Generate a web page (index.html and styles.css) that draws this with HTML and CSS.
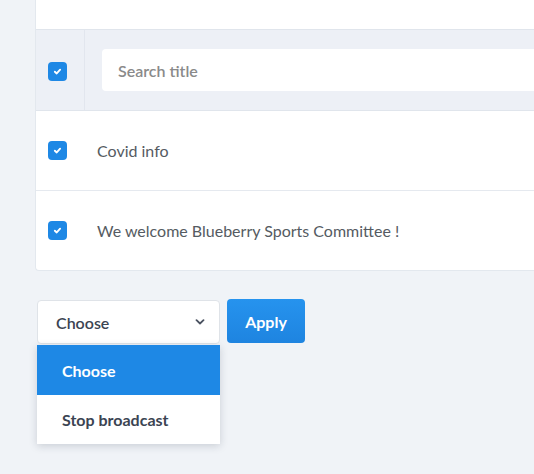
FILE: index.html
```html
<!DOCTYPE html>
<html>
<head>
<meta charset="utf-8">
<link rel="stylesheet" href="styles.css">
</head>
<body>
<div class="page">
  <div class="card">
    <div class="card-top"></div>
    <div class="row row-head">
      <div class="cell-check"><span class="cb"><svg viewBox="0 0 10 10"><path d="M2.6 5.2 L4.3 6.8 L7.4 3.4" /></svg></span></div>
      <div class="cell-main"><div class="search">Search title</div></div>
    </div>
    <div class="row">
      <div class="cell-check"><span class="cb"><svg viewBox="0 0 10 10"><path d="M2.6 5.2 L4.3 6.8 L7.4 3.4" /></svg></span></div>
      <div class="cell-text">Covid info</div>
    </div>
    <div class="row row-last">
      <div class="cell-check"><span class="cb"><svg viewBox="0 0 10 10"><path d="M2.6 5.2 L4.3 6.8 L7.4 3.4" /></svg></span></div>
      <div class="cell-text">We welcome Blueberry Sports Committee !</div>
    </div>
  </div>
  <div class="actions">
    <div class="select-wrap">
      <div class="select">
        <span>Choose</span>
        <svg class="chev" viewBox="0 0 10 6"><path d="M1.5 1.2 L5 4.5 L8.5 1.2" /></svg>
      </div>
      <ul class="menu">
        <li class="opt opt-active">Choose</li>
        <li class="opt">Stop broadcast</li>
      </ul>
    </div>
    <button class="btn">Apply</button>
  </div>
</div>
</body>
</html>
```
FILE: styles.css
```css
* { box-sizing: border-box; }
html, body { margin: 0; padding: 0; }
body {
  background: #f0f3f7;
  font-family: "Lato", "Noto Sans", sans-serif;
  width: 534px;
  height: 474px;
  overflow: hidden;
}
.page { padding-left: 35px; }
.card {
  background: #fff;
  border: 1px solid #e3e8ee;
  border-top: none;
  border-right: none;
  border-radius: 0 0 0 4px;
}
.card-top { height: 29px; }
.row {
  display: flex;
  align-items: center;
  height: 80px;
  border-bottom: 1px solid #e5e9ef;
}
.row-last { border-bottom: none; height: 79px; }
.row-head {
  background: #edf0f6;
  border-top: 1px solid #e0e5ec;
  border-bottom: 1px solid #e0e5ec;
  height: 82px;
  align-items: stretch;
}
.cell-check {
  width: 49px;
  display: flex;
  align-items: center;
  padding-left: 12px;
  flex-shrink: 0;
}
.row-head .cell-check { border-right: 1px solid #e2e6ee; padding-top: 2px; }
.cb {
  width: 19px;
  height: 19px;
  border-radius: 4px;
  background: #1e88e5;
  display: flex;
  align-items: center;
  justify-content: center;
}
.cb svg { width: 11px; height: 11px; }
.cb path { fill: none; stroke: #fff; stroke-width: 1.7; stroke-linecap: round; stroke-linejoin: round; }
.cell-main {
  flex: 1;
  display: flex;
  align-items: center;
  padding-left: 17px;
}
.search {
  width: 100%;
  height: 42px;
  background: #fff;
  border-radius: 4px 0 0 4px;
  padding-left: 16px;
  display: flex;
  align-items: center;
  font-size: 16px;
  font-weight: 600;
  color: #8a8a8a;
}
.cell-text {
  padding-left: 12px;
  font-size: 16px;
  color: #555b62;
}
.actions {
  display: flex;
  align-items: flex-start;
  gap: 7px;
  margin-top: 29px;
  padding-left: 2px;
}
.select-wrap { position: relative; width: 183px; }
.select {
  height: 44px;
  border: 1px solid #dfe3e8;
  border-radius: 4px;
  background: #fff;
  display: flex;
  align-items: center;
  justify-content: space-between;
  padding: 0 14px 0 18px;
  font-size: 16px;
  font-weight: 600;
  color: #3b4452;
}
.chev { width: 10px; height: 6px; }
.chev path { fill: none; stroke: #4a5260; stroke-width: 1.8; stroke-linecap: round; stroke-linejoin: round; }
.menu {
  position: absolute;
  top: 45px;
  left: 0;
  width: 183px;
  margin: 0;
  padding: 0;
  list-style: none;
  background: #fff;
  box-shadow: 0 2px 8px rgba(30, 40, 60, 0.18);
}
.opt {
  height: 49px;
  display: flex;
  align-items: center;
  padding-left: 25px;
  font-size: 16px;
  font-weight: 700;
  color: #3b4452;
}
.opt-active { background: #1e88e5; color: #fff; height: 50px; }
.btn {
  width: 78px;
  height: 44px;
  margin-top: -1px;
  border: none;
  border-radius: 4px;
  background: linear-gradient(#2693ee, #1e84e0);
  color: #fff;
  font-family: inherit;
  font-size: 16px;
  font-weight: 700;
  padding: 0;
}
```
